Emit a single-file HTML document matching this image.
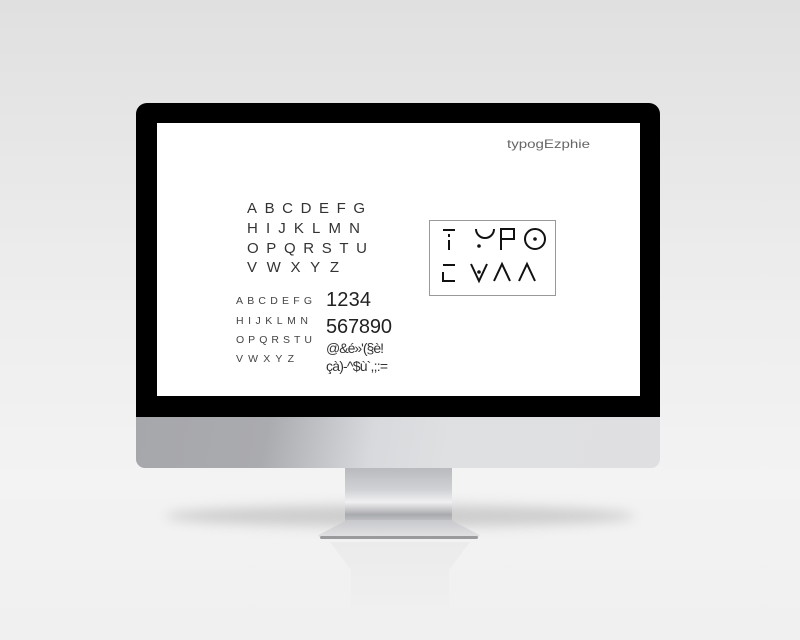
<!DOCTYPE html>
<html><head><meta charset="utf-8"><style>
html,body{margin:0;padding:0}
body{width:800px;height:640px;position:relative;overflow:hidden;background:linear-gradient(#e0e0e0 0%,#ececec 40%,#f3f3f3 75%,#f0f0f0 100%);font-family:"Liberation Sans",sans-serif}
.shadow{position:absolute;left:165px;top:505px;width:470px;height:22px;border-radius:50%;background:#c4c4c4;filter:blur(6px);opacity:.8}
.bezel{position:absolute;left:136px;top:103px;width:524px;height:330px;background:#000;border-radius:11px 11px 0 0}
.screen{position:absolute;left:157px;top:123px;width:483px;height:273px;background:#fff}
.chin{position:absolute;left:136px;top:417px;width:524px;height:51px;border-radius:0 0 9px 9px;background:linear-gradient(100deg,#a6a7ab 0%,#aaabaf 25%,#d8d9dc 45%,#dfe0e2 60%,#dfdfe1 100%)}
.stand{position:absolute;left:345px;top:468px;width:107px;height:55px;background:linear-gradient(#b9babd 0%,#d1d2d5 40%,#f0f0f2 62%,#a9aaad 85%,#c9cacd 100%)}
.base{position:absolute;left:318px;top:520px;width:162px;height:19px;background:linear-gradient(#c7c8cb,#e4e4e6);border-radius:0 0 6px 6px;clip-path:polygon(18% 0,82% 0,100% 80%,100% 100%,0 100%,0 80%)}
.baseline{position:absolute;left:320px;top:536px;width:158px;height:3px;background:#9a9a9c;border-radius:2px}
.refl{position:absolute;left:330px;top:542px;width:140px;height:80px;background:linear-gradient(rgba(215,215,218,.25),rgba(240,240,240,0));clip-path:polygon(0 0,100% 0,85% 35%,85% 100%,15% 100%,15% 35%)}
svg{position:absolute;left:0;top:0}
</style></head><body>
<div class="shadow"></div>
<div class="bezel"></div>
<div class="screen"></div>
<div class="chin"></div>
<div class="stand"></div>
<div class="base"></div>
<div class="baseline"></div>
<div class="refl"></div>
<svg width="800" height="640" viewBox="0 0 800 640">
<g font-family="Liberation Sans, sans-serif" fill="#333">
<text x="507" y="148" font-size="12" textLength="83" fill="#666" lengthAdjust="spacingAndGlyphs">typogEzphie</text>
<g font-size="15">
<text x="247" y="213" textLength="118" lengthAdjust="spacing">ABCDEFG</text>
<text x="247" y="233" textLength="113" lengthAdjust="spacing">HIJKLMN</text>
<text x="247" y="253" textLength="120" lengthAdjust="spacing">OPQRSTU</text>
<text x="247" y="272" textLength="92" lengthAdjust="spacing">VWXYZ</text>
</g>
<g font-size="10.5" fill="#444">
<text x="236" y="304" textLength="76" lengthAdjust="spacing">ABCDEFG</text>
<text x="236" y="324" textLength="72" lengthAdjust="spacing">HIJKLMN</text>
<text x="236" y="343" textLength="76" lengthAdjust="spacing">OPQRSTU</text>
<text x="236" y="362" textLength="58" lengthAdjust="spacing">VWXYZ</text>
</g>
<text x="326" y="306" font-size="20" textLength="45" fill="#222">1234</text>
<text x="326" y="333" font-size="20" textLength="66" fill="#222">567890</text>
<text x="326" y="353" font-size="14" textLength="58">@&amp;é»'(§è!</text>
<text x="326" y="371" font-size="14" textLength="62">çà)-^$ù`,;:=</text>
</g>
<rect x="429.5" y="220.5" width="126" height="75" fill="none" stroke="#999" stroke-width="1"/>
<g fill="none" stroke="#111" stroke-width="2">
<path d="M443 230h12M449 234v3M449 240v10"/>
<path d="M476 229a9 9 0 0 0 18 0"/>
<path d="M501 250v-21h13v10h-12"/>
<circle cx="535" cy="239" r="10"/>
<path d="M443 265h12M443 272v9h12"/>
<path d="M471 264l8 17l8 -17"/>
<path d="M494 281l8 -17l8 17"/>
<path d="M519 281l8 -17l8 17"/>
</g>
<g fill="#111"><circle cx="479" cy="246" r="1.8"/><circle cx="535" cy="239" r="1.8"/><circle cx="479" cy="272" r="1.8"/></g>
</svg>
</body></html>
